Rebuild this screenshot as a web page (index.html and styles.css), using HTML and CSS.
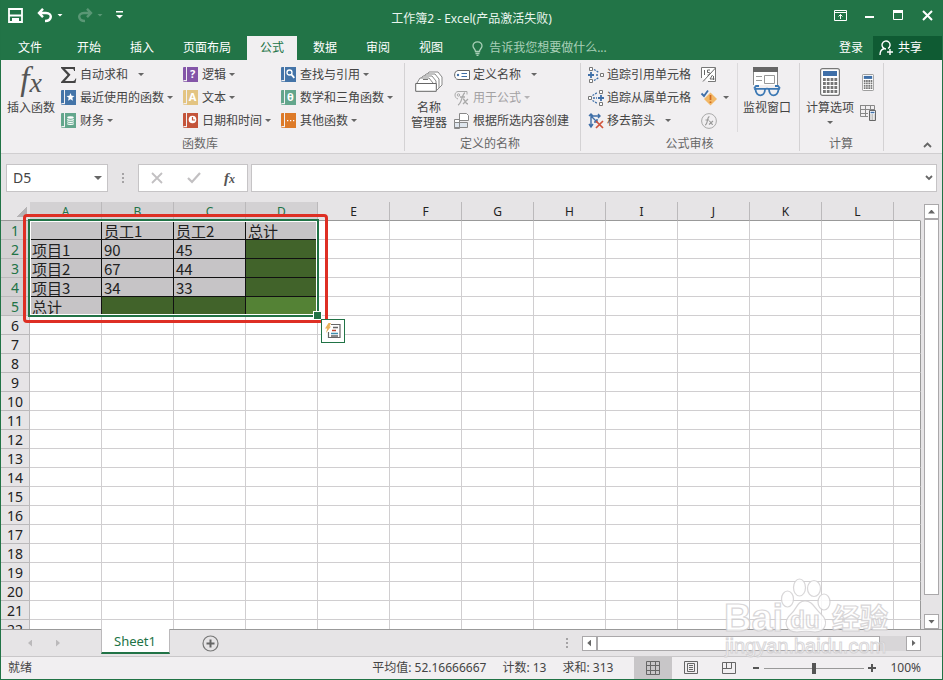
FILE: index.html
```html
<!DOCTYPE html>
<html lang="zh-CN">
<head>
    <meta charset="UTF-8">
    <meta name="viewport" content="width=device-width, initial-scale=1.0">
    <title>工作簿2 - Excel</title>
    <link rel="stylesheet" href="styles.css">
</head>
<body>
<svg class="defs" aria-hidden="true">
    <symbol id="book" viewBox="0 0 16 16">
        <path fill="currentColor" d="M1 0h2v13H1.500a1.500 1.500 0 0 0-1.500 1V1a1 1 0 0 1 1-1zM4 0h11v15H4zM0 14.200h15V15H1a1 1 0 0 1-1-.8z"/>
    </symbol>
    <symbol id="calc" viewBox="0 0 20 28">
        <rect x=".6" y=".6" width="18.800" height="26.800" rx="2" fill="#fff" stroke="#777" stroke-width="1.200"/>
        <path fill="#3f6fa8" d="M3 3h14v5H3z"/>
        <path stroke="#777" stroke-width="3" stroke-dasharray="2.800 1" d="M3 11.500h14.500M3 15.500h14.500M3 19.500h14.500M3 23.500h14.500"/>
    </symbol>
</svg>
<div class="window">
    <header class="titlebar">
        <div class="quick">
            <button class="q-save" aria-label="保存"><svg width="15" height="15" viewBox="0 0 15 15"><path fill="none" stroke="#fff" stroke-width="1.800" d="M1 1h13v13H1zM1 7.500h13"/><path fill="#fff" d="M4 10h7v5H8v-2H6v2H4z"/></svg></button>
            <button aria-label="撤消"><svg width="16" height="15" viewBox="0 0 16 15"><path fill="none" stroke="#fff" stroke-width="2.400" d="M6 .8L2 5l4 4.200M2 5h7c7 0 6 8-1 8"/></svg></button>
            <button class="arrow light" aria-label="撤消列表"></button>
            <button class="dim" aria-label="恢复"><svg width="16" height="15" viewBox="0 0 16 15"><path fill="none" stroke="#fff" stroke-width="2.400" d="M10 .8L14 5l-4 4.200M14 5H7C0 5 1 13 8 13"/></svg></button>
            <button class="arrow light dim" aria-label="恢复列表"></button>
            <button class="q-more" aria-label="自定义快速访问工具栏"><svg width="7" height="8" viewBox="0 0 7 8"><path fill="#fff" d="M0 0h7v1.500H0zM0 4h7L3.500 7.500z"/></svg></button>
        </div>
        <h1>工作簿2 - Excel(产品激活失败)</h1>
        <div class="win-buttons">
            <button aria-label="功能区显示选项"><svg width="13" height="11" viewBox="0 0 13 11"><path fill="none" stroke="#fff" d="M.5.5h12v10H.500zM.5 2.500h12M6.500 9V4.500M4.500 6.500l2-2 2 2"/></svg></button>
            <button aria-label="最小化"><svg width="10" height="11" viewBox="0 0 10 11"><path fill="#fff" d="M0 6h9v2H0z"/></svg></button>
            <button aria-label="最大化"><svg width="11" height="11" viewBox="0 0 11 11"><path fill="none" stroke="#fff" d="M.5.5h9v9H.500z"/><path fill="#fff" d="M0 0h10v3H0z"/></svg></button>
            <button aria-label="关闭"><svg width="11" height="11" viewBox="0 0 11 11"><path stroke="#fff" stroke-width="2" d="M1 1l9 9M10 1l-9 9"/></svg></button>
        </div>
    </header>

    <nav class="tabs">
        <button class="file">文件</button>
        <button>开始</button>
        <button>插入</button>
        <button>页面布局</button>
        <button class="active">公式</button>
        <button>数据</button>
        <button>审阅</button>
        <button>视图</button>
        <label class="tell">
            <svg width="11" height="15" viewBox="0 0 11 15"><path fill="none" stroke="#a9d0b8" stroke-width="1.300" d="M3.500 10.500C3.500 8 1 7.500 1 5a4.500 4.200 0 0 1 9 0c0 2.500-2.500 3-2.500 5.500zM3.500 12.500h4M4.500 14.300h2"/></svg>
            <input type="text" placeholder="告诉我您想要做什么..." aria-label="告诉我您想要做什么">
        </label>
        <button class="login">登录</button>
        <button class="share"><svg width="15" height="16" viewBox="0 0 15 16"><path fill="none" stroke="#fff" stroke-width="1.400" d="M1 15c0-4 2-6 4.500-6.500M7 9a4 4 0 1 1 2-.5M11 9v6M8 12h6"/></svg>共享</button>
    </nav>

    <section class="ribbon">
        <div class="group library">
            <div class="tools">
                <button class="big"><span class="big-icon fx">f<i>x</i></span>插入函数</button>
                <div class="col col-a">
                    <button class="gap"><svg class="ico" viewBox="0 0 16 16"><path fill="#444" d="M0 0h14v4h-1c0-1.500-.5-2-2-2H4l5.500 5.700L4 14h8c1.500 0 2-1 2.500-2.500h.8L14.500 16H0v-1l6.500-7L0 1z"/></svg>自动求和<span class="arrow"></span></button>
                    <button><svg class="ico blue" viewBox="0 0 16 16"><use href="#book"/><path fill="#fff" d="M9.500 3l1.100 2.700 2.900.2-2.200 1.900.7 2.900-2.500-1.500L7 10.700l.7-2.900-2.200-1.900 2.900-.2z"/></svg>最近使用的函数<span class="arrow"></span></button>
                    <button><svg class="ico green" viewBox="0 0 16 16"><use href="#book"/><ellipse cx="9.500" cy="4.500" rx="3.300" ry="1.200" fill="#fff"/><path fill="none" stroke="#fff" stroke-width="1.200" d="M6.200 6.500c1 1 5.600 1 6.600 0M6.200 8.600c1 1 5.600 1 6.600 0M6.200 10.700c1 1 5.600 1 6.600 0"/></svg>财务<span class="arrow"></span></button>
                </div>
                <div class="col col-b">
                    <button><svg class="ico purple" viewBox="0 0 16 16"><use href="#book"/><text x="9.500" y="11" class="glyph">?</text></svg>逻辑<span class="arrow"></span></button>
                    <button><svg class="ico sand" viewBox="0 0 16 16"><use href="#book"/><text x="9.500" y="11" class="glyph">A</text></svg>文本<span class="arrow"></span></button>
                    <button><svg class="ico brick" viewBox="0 0 16 16"><use href="#book"/><circle cx="9.500" cy="6.500" r="3.800" fill="#fff"/><path fill="none" stroke="#c4543a" stroke-width="1.200" d="M9.500 4v3H12"/></svg>日期和时间<span class="arrow"></span></button>
                </div>
                <div class="col">
                    <button><svg class="ico blue" viewBox="0 0 16 16"><use href="#book"/><circle cx="8.500" cy="5.500" r="2.500" fill="none" stroke="#fff" stroke-width="1.300"/><path stroke="#fff" stroke-width="1.800" d="M10.300 7.300l3 3.500"/></svg>查找与引用<span class="arrow"></span></button>
                    <button><svg class="ico green" viewBox="0 0 16 16"><use href="#book"/><text x="9.500" y="11" class="glyph">θ</text></svg>数学和三角函数<span class="arrow"></span></button>
                    <button><svg class="ico orange" viewBox="0 0 16 16"><use href="#book"/><path fill="#fff" d="M6 7h1.300v1.300H6zM9 7h1.300v1.300H9zM12 7h1.300v1.300H12z"/></svg>其他函数<span class="arrow"></span></button>
                </div>
            </div>
            <h2>函数库</h2>
        </div>

        <div class="group names">
            <div class="tools">
                <button class="big"><span class="big-icon"><svg width="28" height="21" viewBox="0 0 28 21"><g fill="#fff" stroke="#888"><path d="M11 5l3-4h9l4 5v8l-5 5"/><path d="M8 7l3-4h9l4 5v9"/><path d="M5 9l3-4h9l4 5v7"/><path d="M2 12l3-5h9l4 5"/><path stroke="#666" d="M.7 12.500h20.600v7.800H.700z"/></g><path stroke="#777" d="M8 8.500h5"/></svg></span>名称<br>管理器</button>
                <div class="col">
                    <button class="gap"><svg class="ico" viewBox="0 0 16 16"><path fill="#fff" stroke="#666" d="M4 3.500h11.500v9H4C-.5 12-.5 4 4 3.500z"/><circle cx="4" cy="8" r="1.200" fill="#3f6fa8"/><path stroke="#3f6fa8" stroke-width="1.200" d="M7.500 6.500h5.500M7.500 9.500h5.500"/></svg>定义名称<span class="arrow"></span></button>
                    <button class="disabled" disabled><svg class="ico" viewBox="0 0 16 16"><path fill="none" stroke="#aaa" d="M4 9C0 8 0 2 4 1.500h9v3"/><circle cx="4.500" cy="5" r="1.200" fill="none" stroke="#aaa"/><path fill="none" stroke="#aaa" stroke-width="1.300" d="M11 3C8 3 8 14 4 15M6 7h5M9 9c2 0 2 5 5 5M14 9l-5 5"/></svg>用于公式<span class="arrow"></span></button>
                    <button><svg class="ico" viewBox="0 0 16 16"><path fill="#fff" stroke="#888" d="M5.500 7.500v-7h7l2 2v5zM.5 6.500h5v9h-5z"/><path fill="#dfe6ee" stroke="#888" d="M.5 9.500h13v5H.500zM5.500 9.500v5"/></svg>根据所选内容创建</button>
                </div>
            </div>
            <h2>定义的名称</h2>
        </div>

        <div class="group audit">
            <div class="tools">
                <div class="col col-trace">
                    <button><svg class="ico" viewBox="0 0 16 16"><path fill="#fff" stroke="#777" d="M1.500.5h3v3h-3zM1.500 12.500h3v3h-3zM12.500 6.500h3v3h-3z"/><path stroke="#3f6fa8" stroke-width="1.800" d="M3 5v6M0 8h6"/><path fill="none" stroke="#3f6fa8" stroke-width="1.300" stroke-dasharray="2 1" d="M6 2.500l5 3M6 13.500l5-3M8 8h3"/></svg>追踪引用单元格</button>
                    <button><svg class="ico" viewBox="0 0 16 16"><path fill="#fff" stroke="#777" d="M.5 6.500h3v3h-3zM11.500.5h3v3h-3zM11.500 12.500h3v3h-3z"/><path stroke="#3f6fa8" stroke-width="1.800" d="M13 5v6M10 8h6"/><path fill="none" stroke="#3f6fa8" stroke-width="1.300" stroke-dasharray="2 1" d="M4.500 5.500l5-3M4.500 10.500l5 3M5 8h4"/></svg>追踪从属单元格</button>
                    <button class="gap"><svg class="ico" viewBox="0 0 16 16"><path fill="none" stroke="#3f6fa8" stroke-width="1.400" d="M3 1v13M1 3l2-2 2 2M1 11l2 3 2-3M3 3h9M10 1l2 2-2 2M3 3l6 6M6 9h3V6"/><path stroke="#d0533a" stroke-width="1.700" d="M8 8l7 7M15 8l-7 7"/></svg>移去箭头<span class="arrow"></span></button>
                </div>
                <div class="col col-icons">
                    <button aria-label="显示公式"><svg class="ico" viewBox="0 0 16 16"><path fill="#fff" stroke="#777" d="M.5 11V.5h14v14H7"/><path fill="none" stroke="#666" d="M14.500 1L2 14.500M3.500 3v5M9 3H6.500v2.500H8c1.500 0 1.500 2.500-1.500 2.500M11.500 8l-2.500 4h4.500M12.500 9v4"/></svg></button>
                    <button aria-label="错误检查"><svg class="ico" viewBox="0 0 16 16"><path fill="#f2b867" d="M9.500 2.500L16 9l-6.500 6.500L3 9z"/><path stroke="#d2691e" stroke-width="1.700" d="M9.500 5v5M9.500 11.500V13"/><path fill="none" stroke="#3f6fa8" stroke-width="1.800" d="M.5 3.500L3 6l4-5.500"/></svg><span class="arrow"></span></button>
                    <button aria-label="公式求值" class="disabled"><svg class="ico" viewBox="0 0 16 16"><circle cx="8" cy="8" r="7.400" fill="none" stroke="#aaa"/><path fill="none" stroke="#999" stroke-width="1.100" d="M8.500 4C6 3 7 12 4 12M4.500 7H8M8 8c2 0 1.500 3.500 4 3.500M12 8l-4 3.500"/></svg></button>
                </div>
                <button class="big watch"><span class="big-icon"><svg width="28" height="30" viewBox="0 0 28 30"><path fill="#fff" stroke="#888" d="M.5.5h24v21H.500z"/><path fill="#666" d="M0 0h25v5H0z"/><path stroke="#999" d="M3 9.500h6M3 13.500h6M11.500 8.500h10v8h-10z" fill="none"/><path fill="#f1eff1" d="M0 18h28v12H0z"/><path fill="none" stroke="#3c78b4" stroke-width="1.800" d="M1 21.500l2-2.500h3M27 21.500L25 19h-3M1 21.900h11c0 8.500-9 8.500-9.500.5M27 21.900H16c0 8.500 9 8.500 9.500.5M12 22.500c1-1 3-1 4 0"/></svg></span>监视窗口</button>
            </div>
            <h2>公式审核</h2>
        </div>

        <div class="group compute">
            <div class="tools">
                <button class="big"><span class="big-icon"><svg width="20" height="28"><use href="#calc"/></svg></span>计算选项<span class="arrow"></span></button>
                <div class="mini">
                    <button aria-label="开始计算"><svg width="12" height="17"><use href="#calc"/></svg></button>
                    <button aria-label="计算工作表"><svg width="16" height="16" viewBox="0 0 16 16"><path fill="none" stroke="#888" d="M0 .5h14.500V5M.5 0v11.500H8M0 4.500h14M0 8.500h8M5.500 0v12M10.500 0v5"/><path fill="#fff" stroke="#666" d="M9.500 5.500h6v10h-6z"/><path stroke="#3f6fa8" stroke-width="1.500" d="M10.500 7.500h4"/><path stroke="#666" stroke-dasharray="1 .7" d="M10.500 10h4M10.500 12h4M10.500 14h4"/></svg></button>
                </div>
            </div>
            <h2>计算</h2>
        </div>
        <button class="collapse" aria-label="折叠功能区"><svg width="9" height="6" viewBox="0 0 9 6"><path fill="none" stroke="#666" stroke-width="1.800" d="M1 5l3.500-3.500L8 5"/></svg></button>
    </section>

    <section class="formula-bar">
        <div class="name-box"><input type="text" value="D5" aria-label="名称框"><button class="arrow" aria-label="名称列表"></button></div>
        <span class="dots"></span>
        <div class="formula-buttons">
            <button aria-label="取消"><svg width="12" height="12" viewBox="0 0 12 12"><path stroke="#c2c0c2" stroke-width="1.800" d="M1 1l10 10M11 1L1 11"/></svg></button>
            <button aria-label="输入"><svg width="14" height="12" viewBox="0 0 14 12"><path fill="none" stroke="#c2c0c2" stroke-width="2.200" d="M1 6l4 4 8-9"/></svg></button>
            <button class="fx-small" aria-label="插入函数">f<i>x</i></button>
        </div>
        <div class="formula"><input type="text" aria-label="编辑栏"><button aria-label="展开编辑栏"><svg width="8" height="6" viewBox="0 0 8 6"><path fill="none" stroke="#666" stroke-width="1.800" d="M1 1l3 3 3-3"/></svg></button></div>
    </section>

    <main class="workspace">
        <div class="sheet">
            <table>
                <colgroup id="cols"></colgroup>
                <thead><tr id="letters"></tr></thead>
                <tbody id="rows"></tbody>
            </table>
        </div>
        <div class="vscroll">
            <button aria-label="向上滚动"><span class="tri up"></span></button>
            <div class="vthumb"></div>
            <button aria-label="向下滚动"><span class="tri down"></span></button>
        </div>
        <div class="selection"></div>
        <div class="callout"></div>
        <button class="quick-analysis" aria-label="快速分析"><svg width="16" height="16" viewBox="0 0 16 16"><path fill="#fff" stroke="#666" stroke-width="1.200" d="M6 1.500h9v13H3.500V9"/><path stroke="#666" stroke-width="1.500" d="M8 4.500h5M6 13h7"/><path stroke="#c0452e" stroke-width="1.500" d="M7 7.500h4"/><path stroke="#3f8fae" stroke-width="1.500" d="M6 10.500h7"/><path fill="#e9b25b" d="M3.500 0H6L4.500 3.500H6L1 10l1.200-4.500H0z"/></svg></button>
    </main>

    <footer>
        <div class="sheet-bar">
            <button class="nav-sheet" aria-label="上一张"><span class="tri left pale"></span></button>
            <button class="nav-sheet" aria-label="下一张"><span class="tri right pale"></span></button>
            <button class="sheet-tab">Sheet1</button>
            <button class="add" aria-label="新工作表"><svg width="17" height="17" viewBox="0 0 17 17"><circle cx="8.500" cy="8.500" r="7.500" fill="none" stroke="#777" stroke-width="1.200"/><path stroke="#666" stroke-width="2" d="M8.500 4.500v8M4.500 8.500h8"/></svg></button>
            <span class="dots"></span>
            <div class="hscroll">
                <button aria-label="向左滚动"><span class="tri left"></span></button>
                <div class="hthumb"></div>
                <button aria-label="向右滚动"><span class="tri right"></span></button>
            </div>
        </div>
        <div class="status">
            <span class="ready">就绪</span>
            <span>平均值: 52.16666667</span>
            <span>计数: 13</span>
            <span>求和: 313</span>
            <div class="views">
                <button class="on" aria-label="普通"><svg width="14" height="14" viewBox="0 0 14 14"><path fill="none" stroke="#666" d="M.5.5h13v13H.500zM0 4.500h14M0 9.500h14M4.500 0v14M9.500 0v14"/></svg></button>
                <button aria-label="页面布局"><svg width="14" height="14" viewBox="0 0 14 14"><path fill="none" stroke="#666" d="M.5.5h13v12H.500zM3.500 2.500h7v8h-7zM5 4.500h4M5 6.500h4M5 8.500h4"/></svg></button>
                <button aria-label="分页预览"><svg width="14" height="13" viewBox="0 0 14 13"><path fill="none" stroke="#666" d="M.5.5h13v11H.500zM4.500 0v6.500M0 6.500h9.500V0"/></svg></button>
            </div>
            <button class="zoom-btn" aria-label="缩小"><svg width="8" height="8" viewBox="0 0 8 8"><path fill="#555" d="M1 3h6v2H1z"/></svg></button>
            <input class="zoom" type="range" min="0" max="100" value="50" aria-label="缩放">
            <button class="zoom-btn" aria-label="放大"><svg width="8" height="8" viewBox="0 0 8 8"><path fill="#555" d="M0 3h8v2H0zM3 0h2v8H3z"/></svg></button>
            <button class="percent">100%</button>
        </div>
    </footer>

    <svg class="watermark" width="172" height="84" viewBox="0 0 172 84">
        <g fill="#fff" stroke="#d2d0d2" stroke-width="1.200">
            <text x="0" y="53" class="wm-big">Bai</text>
            <ellipse cx="63.500" cy="21" rx="6" ry="8"/>
            <ellipse cx="75.500" cy="9.500" rx="6" ry="8.500"/>
            <ellipse cx="90" cy="10.500" rx="6.500" ry="8"/>
            <ellipse cx="100" cy="24" rx="6" ry="8"/>
            <path d="M81 23c8 0 9 7 16 13 8 7 5 18-6 18-6-1-12-1-18 0-12 0-14-11-6-18 6-5 6-13 14-13z"/>
            <text x="81" y="50" class="wm-du">du</text>
            <text x="108" y="51" class="wm-cn">经验</text>
            <text x="1" y="75" class="wm-url">jingyan.baidu.com</text>
        </g>
    </svg>
</div>
<script src="script.js"></script>
</body>
</html>
```
FILE: styles.css
```css
* {
    box-sizing: border-box;
}
body {
    margin: 0;
    font-family: "Noto Sans", "Noto Sans CJK SC", sans-serif;
    font-size: 12px;
    line-height: 16px;
    color: #444;
}
button {
    margin: 0;
    padding: 0;
    border: 0;
    background: none;
    font: inherit;
    color: inherit;
    white-space: nowrap;
}
input {
    min-width: 0;
    padding: 0;
    border: 0;
    background: none;
    font: inherit;
    color: inherit;
    outline: 0;
}
svg {
    display: block;
    flex: none;
}
.defs {
    position: absolute;
    width: 0;
    height: 0;
}
.window {
    position: relative;
    display: flex;
    flex-direction: column;
    height: 100vh;
    border: 1px solid #217346;
    border-top: 0;
    background: #e6e4e6;
    overflow: hidden;
}

/* title bar */
.titlebar {
    display: grid;
    grid-template-columns: 1fr auto 1fr;
    height: 36px;
    background: #227447;
    color: #e9f5ee;
}
.titlebar h1 {
    margin: 0;
    font-size: 12px;
    font-weight: normal;
    line-height: 37px;
}
.quick {
    display: flex;
    align-items: center;
    height: 30px;
    padding-left: 7px;
}
.q-save {
    margin-right: 14px;
}
.quick .arrow {
    margin: 0 14px 0 4px;
}
.q-more {
    margin-left: -1px;
}
.dim {
    opacity: 0.25;
}
.win-buttons {
    display: flex;
    justify-content: flex-end;
    height: 30px;
}
.win-buttons button {
    display: flex;
    align-items: center;
    justify-content: center;
    width: 29px;
}
.arrow {
    flex: none;
    width: 6px;
    height: 3px;
    background: #666;
    clip-path: polygon(0 0, 100% 0, 50% 100%);
}
.arrow.light {
    background: #fff;
}

/* ribbon tabs */
.tabs {
    display: flex;
    gap: 3px;
    height: 24px;
    background: #227447;
    color: #fff;
}
.tabs button {
    padding: 0 13px;
    line-height: 22px;
}
.tabs .file {
    padding: 0 16px 0 17px;
    margin-right: 3px;
}
.tabs .active {
    background: #f1eff1;
    color: #217346;
}
.tell {
    display: flex;
    flex: 1;
    align-items: center;
    gap: 6px;
    margin-left: 13px;
    min-width: 0;
}
.tell input {
    flex: 1;
}
.tell input::placeholder {
    color: #a9d0b8;
    opacity: 1;
}
.tabs .login {
    padding: 0 7px;
}
.tabs .share {
    display: flex;
    align-items: center;
    gap: 4px;
    padding: 0 20px 0 6px;
    background: #0f5b33;
}

/* ribbon */
.ribbon {
    display: flex;
    border-bottom: 1px solid #d0ced0;
    background: #f1eff1;
}
.group {
    padding: 3px 11px 0 6px;
    border-right: 1px solid transparent;
    border-image: linear-gradient(transparent 4px, #d4d2d4 4px, #d4d2d4 90px, transparent 90px) 1;
}
.group h2 {
    margin: 0;
    padding-top: 2px;
    font-size: 12px;
    font-weight: normal;
    line-height: 19px;
    text-align: center;
    color: #666;
}
.tools {
    display: flex;
    height: 69px;
}
.col {
    display: flex;
    flex-direction: column;
}
.col button {
    display: flex;
    align-items: center;
    gap: 3px;
    height: 23px;
}
.col .gap .arrow {
    margin-left: 7px;
}
.big {
    display: flex;
    flex-direction: column;
    align-items: center;
    align-self: flex-start;
    line-height: 15px;
}
.big .arrow {
    margin-top: 6px;
}
.big-icon {
    display: flex;
    align-items: center;
    height: 37px;
}
.fx {
    padding-bottom: 4px;
    font: italic 33px/33px "Liberation Serif", serif;
    color: #555;
}
.fx i {
    padding-top: 6px;
    font-size: 28px;
}
.ico {
    width: 16px;
    height: 16px;
    overflow: visible;
}
.glyph {
    fill: #fff;
    font-size: 11px;
    font-weight: bold;
    text-anchor: middle;
}
.blue { color: #4474a8; }
.green { color: #63a68c; }
.purple { color: #8455a8; }
.sand { color: #e3c482; }
.brick { color: #c4543a; }
.orange { color: #dd7a28; }
.disabled {
    color: #a3a1a3;
}
.disabled .arrow {
    background: #b5b3b5;
}
.library .col {
    margin-left: 6px;
}
.library .col-a {
    width: 116px;
}
.library .col-b {
    width: 92px;
}
.names .col {
    margin-left: 7px;
}
.audit {
    padding-left: 7px;
    padding-right: 8px;
}
.col-trace {
    width: 113px;
}
.audit .col-icons {
    width: 37px;
    border-right: 1px solid #dcdadc;
}
.audit .col-icons .arrow {
    margin-left: 3px;
}
.watch {
    margin-left: 5px;
}
.compute {
    padding-right: 7px;
}
.mini {
    display: flex;
    flex-direction: column;
    align-items: center;
    gap: 14px;
    margin-left: 6px;
    padding-top: 11px;
}
.collapse {
    align-self: flex-end;
    margin-left: auto;
    padding: 0 10px 5px;
}

/* formula bar */
.formula-bar {
    display: flex;
    align-items: center;
    padding: 10px 5px;
}
.name-box,
.formula-buttons,
.formula {
    display: flex;
    align-items: center;
    height: 28px;
    border: 1px solid #c6c4c6;
    background: #fff;
}
.name-box {
    width: 102px;
    padding: 0 5px 0 6px;
}
.name-box input {
    flex: 1;
    font-size: 14px;
}
.name-box .arrow {
    width: 8px;
    height: 4px;
}
.dots {
    width: 2px;
    height: 11px;
    margin: 0 14px;
    background: repeating-linear-gradient(#a5a3a5 0 2px, transparent 2px 4px);
}
.formula-buttons {
    width: 110px;
    justify-content: space-between;
    padding: 0 12px;
}
.fx-small {
    font: italic bold 15px/16px "Liberation Serif", serif;
    color: #555;
}
.fx-small i {
    font-size: 12px;
}
.formula {
    flex: 1;
    margin-left: 3px;
    padding: 0 3px 0 8px;
}
.formula input {
    flex: 1;
}

/* grid */
.workspace {
    position: relative;
    display: flex;
    flex: 1;
    min-height: 0;
}
.sheet {
    flex: 1;
    overflow: hidden;
}
table {
    width: 100%;
    table-layout: fixed;
    border-collapse: separate;
    border-spacing: 0;
    background: #fff;
    font-size: 15px;
    line-height: 17px;
    color: #333;
}
.col-head {
    width: 29px;
}
.col-cell {
    width: 72px;
}
th,
td {
    height: 19px;
    padding: 1px 0 0;
    border: 0 solid #d0ced0;
    border-width: 0 1px 1px 0;
    overflow: hidden;
    white-space: nowrap;
}
td {
    padding-left: 2px;
    font-family: "Noto Sans CJK SC", sans-serif;
}
th {
    background: #e6e4e6;
    border-color: #bbb9bb;
    font-size: 14px;
    font-weight: normal;
    color: #222;
}
thead th {
    padding-top: 2px;
    border-bottom-color: #999;
    font-size: 12px;
    line-height: 16px;
}
th.corner {
    border-right-color: #e6e4e6;
    background: linear-gradient(135deg, transparent 50%, #b5b3b5 50%) right 2px bottom 3px / 10px 10px no-repeat #e6e4e6;
}
th.picked {
    background: #d3d1d3;
    color: #217346;
}
tr > :last-child {
    border-right-color: #999;
}
thead tr > :last-child {
    border-right-color: #e6e4e6;
}
td.picked {
    background: #c6c4c6;
    border-color: #111;
    color: #222;
}
td.total {
    background: #41632a;
}
td.current {
    background: #548235;
}
.selection {
    position: absolute;
    left: 27px;
    top: 17px;
    width: 291px;
    height: 98px;
    border: 2px solid #217346;
    outline: 1px solid #fff;
    outline-offset: -3px;
}
.selection::after {
    content: "";
    position: absolute;
    right: -5px;
    bottom: -5px;
    width: 7px;
    height: 7px;
    border: 1px solid #fff;
    background: #217346;
}
.callout {
    position: absolute;
    left: 22px;
    top: 12px;
    width: 305px;
    height: 109px;
    border: 3px solid #de2f24;
    border-radius: 4px;
}
.quick-analysis {
    position: absolute;
    left: 320px;
    top: 117px;
    display: grid;
    place-items: center;
    width: 24px;
    height: 24px;
    border: 1px solid #217346;
    background: #fff;
}

/* scroll bars */
.vscroll {
    display: flex;
    flex-direction: column;
    width: 21px;
    padding: 2px 3px 0;
}
.vscroll button,
.hscroll button {
    display: grid;
    place-items: center;
    width: 15px;
    height: 15px;
    border: 1px solid #aaa8aa;
    background: #fff;
}
.vthumb {
    flex: 1;
    margin-bottom: 19px;
    border: 1px solid #aaa8aa;
    background: #fff;
}
.tri {
    width: 7px;
    height: 4px;
    background: #666;
}
.tri.up { clip-path: polygon(50% 0, 100% 100%, 0 100%); }
.tri.down { clip-path: polygon(0 0, 100% 0, 50% 100%); }
.tri.left,
.tri.right {
    width: 4px;
    height: 7px;
}
.tri.left { clip-path: polygon(100% 0, 100% 100%, 0 50%); }
.tri.right { clip-path: polygon(0 0, 100% 50%, 0 100%); }
.tri.pale {
    background: #bbb9bb;
}
.sheet-bar {
    display: flex;
    align-items: center;
    height: 27px;
    padding: 0 21px 0 3px;
    border-top: 1px solid #999;
}
.nav-sheet {
    display: grid;
    width: 28px;
    justify-content: end;
}
.sheet-tab {
    align-self: flex-start;
    height: 25px;
    margin: -1px 32px 0 41px;
    padding: 0 13px 0 12px;
    border: 1px solid #bbb9bb;
    border-top: 0;
    border-bottom: 2px solid #217346;
    background: #fff;
    color: #217346;
    font-size: 13px;
}
.sheet-bar .dots {
    margin-left: auto;
}
.hscroll {
    display: flex;
    width: 37%;
    background: #d8d6d8;
}
.hthumb {
    flex: 1;
    margin-right: 26px;
    border: 1px solid #aaa8aa;
    background: #fff;
}

/* status bar */
.status {
    display: flex;
    align-items: center;
    gap: 16px;
    height: 23px;
    padding: 0 21px 0 7px;
    border-top: 1px solid #c9c7c9;
    background: #f1eff1;
}
.ready {
    flex: 1;
}
.views {
    display: flex;
    align-self: stretch;
    margin-left: 5px;
}
.views button {
    display: grid;
    place-items: center;
    width: 38px;
}
.views .on {
    background: #c8c6c8;
}
.zoom-btn {
    margin: 0 -12px;
}
.zoom {
    appearance: none;
    width: 100px;
    height: 12px;
    margin: 0;
    background: linear-gradient(#999, #999) center / 100% 1px no-repeat;
}
.zoom::-webkit-slider-thumb {
    appearance: none;
    width: 4px;
    height: 11px;
    background: #555;
}
.percent {
    margin-left: 10px;
}

/* watermark */
.watermark {
    position: absolute;
    right: 46px;
    bottom: 17px;
    opacity: 0.85;
    pointer-events: none;
}
.wm-big {
    font: bold 38px "Liberation Sans", sans-serif;
}
.wm-du {
    font: bold 24px "Liberation Sans", sans-serif;
    text-anchor: middle;
}
.wm-cn {
    font: bold 28px "Noto Sans CJK SC", sans-serif;
}
.wm-url {
    font: 20px "Liberation Sans", sans-serif;
    stroke-width: 1px;
}
```
FILE: script.js
```js
const letters = ['A', 'B', 'C', 'D', 'E', 'F', 'G', 'H', 'I', 'J', 'K', 'L', ''];
const data = [
    ['', '员工1', '员工2', '总计'],
    ['项目1', '90', '45', ''],
    ['项目2', '67', '44', ''],
    ['项目3', '34', '33', ''],
    ['总计', '', '', '']
];

let cols = '<col class="col-head">';
let head = '<th class="corner"></th>';
letters.forEach((letter, c) => {
    cols += letter ? '<col class="col-cell">' : '<col>';
    head += `<th class="${c < 4 ? 'picked' : ''}">${letter}</th>`;
});
document.getElementById('cols').innerHTML = cols;
document.getElementById('letters').innerHTML = head;

let body = '';
for (let r = 0; r < 22; r++) {
    body += `<tr><th class="${r < 5 ? 'picked' : ''}">${r + 1}</th>`;
    for (let c = 0; c < letters.length; c++) {
        let cls = '';
        let text = '';
        if (r < 5 && c < 4) {
            cls = 'picked';
            text = data[r][c];
            if (!text && r + c > 0) cls += ' total';
            if (r === 4 && c === 3) cls += ' current';
        }
        body += `<td class="${cls}">${text}</td>`;
    }
    body += '</tr>';
}
document.getElementById('rows').innerHTML = body;
```
